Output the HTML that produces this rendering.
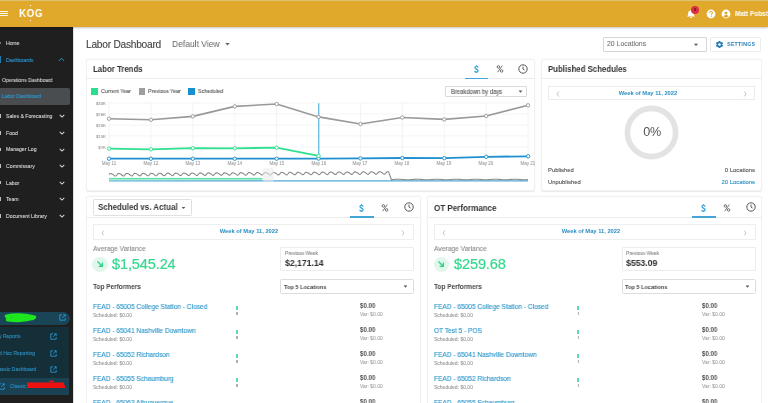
<!DOCTYPE html>
<html><head><meta charset="utf-8"><style>
html,body{margin:0;padding:0;}
body{width:768px;height:403px;overflow:hidden;position:relative;background:#fff;font-family:"Liberation Sans",sans-serif;}
.a{position:absolute;}
.t{position:absolute;white-space:nowrap;line-height:1;will-change:transform;}
</style></head><body>
<div class="a" style="left:0px;top:0px;width:768px;height:27px;background:#E0A92B;box-shadow:0 1px 2px rgba(0,0,0,0.25);z-index:2"></div>
<div class="a" style="left:0px;top:0px;width:768px;height:1px;background:#ddc170;z-index:3"></div>
<div class="a" style="left:0px;top:10.9px;width:7.5px;height:0.9000000000000004px;background:#fff6e0;z-index:3"></div>
<div class="a" style="left:0px;top:12.9px;width:7.5px;height:0.9000000000000004px;background:#fff6e0;z-index:3"></div>
<div class="a" style="left:0px;top:15.0px;width:7.5px;height:0.9000000000000004px;background:#fff6e0;z-index:3"></div>
<div class="t" style="left:18.80px;top:7.51px;font-size:10.5px;color:#fff;font-weight:700;letter-spacing:0.6px;transform:scaleX(0.93);transform-origin:0 0;z-index:3">KOG</div>
<div class="a" style="left:30.2px;top:5px;width:0.6999999999999993px;height:1px;background:#fff;z-index:3"></div>
<div class="a" style="left:30.2px;top:20px;width:0.6999999999999993px;height:1px;background:#fff;z-index:3"></div>
<svg class="a" style="left:686.1px;top:9.2px;z-index:3" width="10" height="10" viewBox="0 0 10 10"><path d="M1.2 7.6 L1.2 7.1 L2.1 6.2 L2.1 4.2 C2.1 2.8 3 1.9 4.3 1.7 L4.3 1.2 L5.7 1.2 L5.7 1.7 C7 1.9 7.9 2.8 7.9 4.2 L7.9 6.2 L8.8 7.1 L8.8 7.6 Z" fill="#fff"/><rect x="4.1" y="8" width="1.8" height="1" rx="0.5" fill="#fff"/></svg>
<div class="a" style="left:691.3px;top:5.6px;width:8.2px;height:8.2px;border-radius:50%;background:#dc2f45;z-index:4"></div>
<div class="t" style="left:395.40px;width:600px;text-align:center;top:8.01px;font-size:4px;color:#4a0a14;font-weight:400;letter-spacing:0px;-webkit-text-stroke:0.1px #4a0a14;z-index:5">8</div>
<svg class="a" style="left:706px;top:9px;z-index:3" width="10" height="10" viewBox="0 0 10 10"><circle cx="5" cy="5" r="4.4" fill="#fff"/><path d="M3.5 3.9 C3.5 2.9 4.2 2.4 5 2.4 C5.9 2.4 6.5 3 6.5 3.7 C6.5 4.6 5.4 4.8 5.4 5.8" stroke="#E0A92B" stroke-width="1.05" fill="none"/><rect x="4.85" y="6.6" width="1.1" height="1.1" fill="#E0A92B"/></svg>
<svg class="a" style="left:721px;top:9px;z-index:3" width="10" height="10" viewBox="0 0 10 10"><circle cx="5" cy="5" r="4.4" fill="#fff"/><circle cx="5" cy="3.9" r="1.5" fill="#E0A92B"/><path d="M2.4 7.6 C3 6.4 4 6.1 5 6.1 C6 6.1 7 6.4 7.6 7.6 C7 8.3 6 8.7 5 8.7 C4 8.7 3 8.3 2.4 7.6Z" fill="#E0A92B"/></svg>
<div class="t" style="left:735.20px;top:11.46px;font-size:6.9px;color:#fff;font-weight:700;letter-spacing:0px;transform:scaleX(0.93);transform-origin:0 0;z-index:3">Matt Pobst</div>
<div class="a" style="left:0px;top:27px;width:72.5px;height:376px;background:#1f1f1f;"></div>
<div class="t" style="left:5.70px;top:40.63px;font-size:5.4px;color:#d8d8d8;font-weight:400;letter-spacing:0px;transform:scaleX(0.93);transform-origin:0 0;-webkit-text-stroke:0.1px #d8d8d8;">Home</div>
<div class="a" style="left:0px;top:42.2px;width:0.6px;height:1.3999999999999986px;background:#777;"></div>
<div class="a" style="left:0px;top:55.8px;width:0.8px;height:7.600000000000001px;background:#1f7ab0;"></div>
<div class="t" style="left:5.50px;top:57.51px;font-size:5.3px;color:#2c9ad6;font-weight:400;letter-spacing:0px;transform:scaleX(0.95);transform-origin:0 0;-webkit-text-stroke:0.1px #2c9ad6;">Dashboards</div>
<svg class="a" style="left:58px;top:57px" width="7" height="5" viewBox="0 0 7 5"><path d="M1 3.8 L3.5 1.3 L6 3.8" stroke="#2c9ad6" stroke-width="1" fill="none"/></svg>
<div class="t" style="left:2.40px;top:77.51px;font-size:5.3px;color:#cfcfcf;font-weight:400;letter-spacing:0px;transform:scaleX(0.95);transform-origin:0 0;-webkit-text-stroke:0.1px #cfcfcf;">Operations Dashboard</div>
<div class="a" style="left:0px;top:88px;width:69.5px;height:16.5px;background:#4a4d50;border-radius:0 2px 2px 0"></div>
<div class="t" style="left:2.40px;top:94.31px;font-size:5.3px;color:#2c9ad6;font-weight:400;letter-spacing:0px;transform:scaleX(0.95);transform-origin:0 0;-webkit-text-stroke:0.1px #2c9ad6;">Labor Dashboard</div>
<div class="t" style="left:5.50px;top:114.10px;font-size:5.2px;color:#d4d4d4;font-weight:400;letter-spacing:0px;-webkit-text-stroke:0.1px #d4d4d4">Sales &amp; Forecasting</div>
<svg class="a" style="left:58.5px;top:114.40px" width="6" height="4" viewBox="0 0 6 4"><path d="M0.7 0.8 L3 3.1 L5.3 0.8" stroke="#d0d0d0" stroke-width="1.05" fill="none"/></svg>
<div class="a" style="left:-1px;top:114.4px;width:1.6px;height:3.5999999999999943px;background:#bdbdbd;"></div>
<div class="t" style="left:5.50px;top:130.70px;font-size:5.2px;color:#d4d4d4;font-weight:400;letter-spacing:0px;-webkit-text-stroke:0.1px #d4d4d4">Food</div>
<svg class="a" style="left:58.5px;top:131.00px" width="6" height="4" viewBox="0 0 6 4"><path d="M0.7 0.8 L3 3.1 L5.3 0.8" stroke="#d0d0d0" stroke-width="1.05" fill="none"/></svg>
<div class="a" style="left:-1px;top:131.0px;width:1.6px;height:3.6000000000000227px;background:#bdbdbd;"></div>
<div class="t" style="left:5.50px;top:147.30px;font-size:5.2px;color:#d4d4d4;font-weight:400;letter-spacing:0px;-webkit-text-stroke:0.1px #d4d4d4">Manager Log</div>
<svg class="a" style="left:58.5px;top:147.60px" width="6" height="4" viewBox="0 0 6 4"><path d="M0.7 0.8 L3 3.1 L5.3 0.8" stroke="#d0d0d0" stroke-width="1.05" fill="none"/></svg>
<div class="a" style="left:-1px;top:147.6px;width:1.6px;height:3.6000000000000227px;background:#bdbdbd;"></div>
<div class="t" style="left:5.50px;top:163.90px;font-size:5.2px;color:#d4d4d4;font-weight:400;letter-spacing:0px;-webkit-text-stroke:0.1px #d4d4d4">Commissary</div>
<svg class="a" style="left:58.5px;top:164.20px" width="6" height="4" viewBox="0 0 6 4"><path d="M0.7 0.8 L3 3.1 L5.3 0.8" stroke="#d0d0d0" stroke-width="1.05" fill="none"/></svg>
<div class="a" style="left:-1px;top:164.2px;width:1.6px;height:3.6000000000000227px;background:#bdbdbd;"></div>
<div class="t" style="left:5.50px;top:180.50px;font-size:5.2px;color:#d4d4d4;font-weight:400;letter-spacing:0px;-webkit-text-stroke:0.1px #d4d4d4">Labor</div>
<svg class="a" style="left:58.5px;top:180.80px" width="6" height="4" viewBox="0 0 6 4"><path d="M0.7 0.8 L3 3.1 L5.3 0.8" stroke="#d0d0d0" stroke-width="1.05" fill="none"/></svg>
<div class="a" style="left:-1px;top:180.79999999999998px;width:1.6px;height:3.6000000000000227px;background:#bdbdbd;"></div>
<div class="t" style="left:5.50px;top:197.10px;font-size:5.2px;color:#d4d4d4;font-weight:400;letter-spacing:0px;-webkit-text-stroke:0.1px #d4d4d4">Team</div>
<svg class="a" style="left:58.5px;top:197.40px" width="6" height="4" viewBox="0 0 6 4"><path d="M0.7 0.8 L3 3.1 L5.3 0.8" stroke="#d0d0d0" stroke-width="1.05" fill="none"/></svg>
<div class="a" style="left:-1px;top:197.39999999999998px;width:1.6px;height:3.6000000000000227px;background:#bdbdbd;"></div>
<div class="t" style="left:5.50px;top:213.70px;font-size:5.2px;color:#d4d4d4;font-weight:400;letter-spacing:0px;-webkit-text-stroke:0.1px #d4d4d4">Document Library</div>
<svg class="a" style="left:58.5px;top:214.00px" width="6" height="4" viewBox="0 0 6 4"><path d="M0.7 0.8 L3 3.1 L5.3 0.8" stroke="#d0d0d0" stroke-width="1.05" fill="none"/></svg>
<div class="a" style="left:-1px;top:214.0px;width:1.6px;height:3.6000000000000227px;background:#bdbdbd;"></div>
<div class="a" style="left:0px;top:311.5px;width:69.6px;height:13.399999999999977px;background:#1a4556;border-radius:0 6.7px 6.7px 0"></div>
<svg class="a" style="left:0px;top:311px" width="40" height="14" viewBox="0 0 40 14"><path d="M6.5 5.2 C14 3.2 26 3.6 34.5 6.2 C28 9.2 18 10 7.5 8.6 C15 7.2 24 6.8 33 7.4" stroke="#1ee61e" stroke-width="3.6" fill="none" stroke-linecap="round" stroke-linejoin="round"/></svg>
<div class="a" style="left:0px;top:326.8px;width:69.2px;height:67.80000000000001px;background:#152f39;"></div>
<div class="a" style="left:0px;top:378px;width:69.2px;height:16.600000000000023px;background:#1a4253;"></div>
<svg class="a" style="left:58.60px;top:314.30px" width="7" height="7" viewBox="0 0 7 7"><path d="M3 0.8 L0.8 0.8 L0.8 6.2 L6.2 6.2 L6.2 4" stroke="#2c9ad6" stroke-width="0.85" fill="none"/><path d="M3.2 3.8 L6.2 0.8 M4.2 0.8 L6.2 0.8 L6.2 2.8" stroke="#2c9ad6" stroke-width="0.85" fill="none"/></svg>
<div class="t" style="left:-1.00px;top:334.17px;font-size:5.0px;color:#2c8fc0;font-weight:400;letter-spacing:0px;-webkit-text-stroke:0.1px #2c8fc0;">y Reports</div>
<svg class="a" style="left:50.20px;top:333.10px" width="7" height="7" viewBox="0 0 7 7"><path d="M3 0.8 L0.8 0.8 L0.8 6.2 L6.2 6.2 L6.2 4" stroke="#2c9ad6" stroke-width="0.85" fill="none"/><path d="M3.2 3.8 L6.2 0.8 M4.2 0.8 L6.2 0.8 L6.2 2.8" stroke="#2c9ad6" stroke-width="0.85" fill="none"/></svg>
<div class="t" style="left:-1.00px;top:350.77px;font-size:5.0px;color:#2c8fc0;font-weight:400;letter-spacing:0px;-webkit-text-stroke:0.1px #2c8fc0;">d Hoc Reporting</div>
<svg class="a" style="left:50.20px;top:349.70px" width="7" height="7" viewBox="0 0 7 7"><path d="M3 0.8 L0.8 0.8 L0.8 6.2 L6.2 6.2 L6.2 4" stroke="#2c9ad6" stroke-width="0.85" fill="none"/><path d="M3.2 3.8 L6.2 0.8 M4.2 0.8 L6.2 0.8 L6.2 2.8" stroke="#2c9ad6" stroke-width="0.85" fill="none"/></svg>
<div class="t" style="left:-1.00px;top:367.17px;font-size:5.0px;color:#2c8fc0;font-weight:400;letter-spacing:0px;-webkit-text-stroke:0.1px #2c8fc0;">assic Dashboard</div>
<svg class="a" style="left:50.20px;top:366.10px" width="7" height="7" viewBox="0 0 7 7"><path d="M3 0.8 L0.8 0.8 L0.8 6.2 L6.2 6.2 L6.2 4" stroke="#2c9ad6" stroke-width="0.85" fill="none"/><path d="M3.2 3.8 L6.2 0.8 M4.2 0.8 L6.2 0.8 L6.2 2.8" stroke="#2c9ad6" stroke-width="0.85" fill="none"/></svg>
<svg class="a" style="left:-2.00px;top:382.80px" width="7" height="7" viewBox="0 0 7 7"><path d="M3 0.8 L0.8 0.8 L0.8 6.2 L6.2 6.2 L6.2 4" stroke="#2c9ad6" stroke-width="0.85" fill="none"/><path d="M3.2 3.8 L6.2 0.8 M4.2 0.8 L6.2 0.8 L6.2 2.8" stroke="#2c9ad6" stroke-width="0.85" fill="none"/></svg>
<div class="t" style="left:9.70px;top:383.97px;font-size:5.0px;color:#2c8fc0;font-weight:400;letter-spacing:0px;-webkit-text-stroke:0.1px #2c8fc0;">Classic</div>
<svg class="a" style="left:24px;top:379px" width="44" height="12" viewBox="0 0 44 12"><path d="M3 5 L40 5 M3 7.5 L41 7.5" stroke="#ee1111" stroke-width="3.2" fill="none"/><rect x="25" y="1.6" width="5" height="1.6" fill="#ee1111"/></svg>
<div class="a" style="left:72.5px;top:27px;width:695.5px;height:376px;background:#fff;"></div>
<div class="a" style="left:72.5px;top:27px;width:1.0px;height:376px;background:#e0e0e0;"></div>
<div class="t" style="left:86.30px;top:39.66px;font-size:10.2px;color:#424242;font-weight:400;letter-spacing:-0.25px;-webkit-text-stroke:0.1px #424242">Labor Dashboard</div>
<div class="t" style="left:172.30px;top:39.37px;font-size:9.6px;color:#666;font-weight:400;letter-spacing:0px;transform:scaleX(0.885);transform-origin:0 0;">Default View</div>
<svg class="a" style="left:224px;top:42px" width="7" height="5" viewBox="0 0 7 5"><path d="M1.2 1 L5.8 1 L3.5 3.6Z" fill="#666"/></svg>
<div class="a" style="left:603.2px;top:37.2px;width:103.39999999999998px;height:14.399999999999999px;background:#fff;border:0.8px solid #d6d6d6;box-sizing:border-box;border-radius:1px"></div>
<div class="t" style="left:606.70px;top:41.46px;font-size:6.9px;color:#777;font-weight:400;letter-spacing:0px;-webkit-text-stroke:0.1px #777;">20 Locations</div>
<svg class="a" style="left:693px;top:42.6px" width="6" height="4" viewBox="0 0 6 4"><path d="M0.9 0.8 L5.1 0.8 L3 3.1Z" fill="#555"/></svg>
<div class="a" style="left:710.3px;top:37.0px;width:51.200000000000045px;height:15.0px;background:#fff;border:0.8px solid #ececec;box-sizing:border-box;border-radius:1.5px"></div>
<svg class="a" style="left:714.7px;top:39.9px" width="9" height="9" viewBox="0 0 24 24"><path fill="#1f77b4" d="M19.14 12.94c.04-.3.06-.61.06-.94 0-.32-.02-.64-.07-.94l2.03-1.58a.49.49 0 0 0 .12-.61l-1.92-3.32a.488.488 0 0 0-.59-.22l-2.39.96c-.5-.38-1.03-.7-1.62-.94l-.36-2.54a.484.484 0 0 0-.48-.41h-3.84c-.24 0-.43.17-.47.41l-.36 2.54c-.59.24-1.13.57-1.62.94l-2.39-.96c-.22-.08-.47 0-.59.22L2.74 8.87c-.12.21-.08.47.12.61l2.03 1.58c-.05.3-.09.63-.09.94s.02.64.07.94l-2.03 1.58a.49.49 0 0 0-.12.61l1.92 3.32c.12.22.37.29.59.22l2.39-.96c.5.38 1.03.7 1.62.94l.36 2.54c.05.24.24.41.48.41h3.84c.24 0 .44-.17.47-.41l.36-2.54c.59-.24 1.13-.56 1.62-.94l2.39.96c.22.08.47 0 .59-.22l1.92-3.32c.12-.22.07-.47-.12-.61l-2.01-1.58zM12 15.6c-1.98 0-3.6-1.62-3.6-3.6s1.62-3.6 3.6-3.6 3.6 1.62 3.6 3.6-1.62 3.6-3.6 3.6z"/></svg>
<div class="t" style="left:727.00px;top:41.25px;font-size:6.2px;color:#3382bb;font-weight:700;letter-spacing:0.25px;transform:scaleX(0.86);transform-origin:0 0;">SETTINGS</div>
<div class="a" style="left:85.6px;top:58.8px;width:449.1px;height:132.7px;background:#fff;border:0.6px solid #f1f1f1;box-sizing:border-box;box-shadow:0 0.8px 1.2px rgba(0,0,0,0.09);border-radius:2px"></div>
<div class="t" style="left:92.80px;top:64.85px;font-size:8.8px;color:#333;font-weight:700;letter-spacing:0px;transform:scaleX(0.89);transform-origin:0 0;">Labor Trends</div>
<div class="a" style="left:86.2px;top:78.0px;width:447.90000000000003px;height:0.7999999999999972px;background:#ededed;"></div>
<svg class="a" style="left:473.60px;top:64.90px" width="5" height="8.6" viewBox="0 0 5 8.6"><path d="M4.1 2.6 C4 1.8 3.4 1.3 2.5 1.3 C1.6 1.3 0.95 1.8 0.95 2.6 C0.95 4.4 4.1 3.8 4.1 5.8 C4.1 6.7 3.4 7.2 2.5 7.2 C1.5 7.2 0.85 6.7 0.8 5.9 M2.5 0.2 L2.5 1.4 M2.5 7.1 L2.5 8.3" stroke="#2a9fd6" stroke-width="1.15" fill="none"/></svg>
<svg class="a" style="left:495.50px;top:65.10px" width="8" height="8" viewBox="0 0 8 8"><circle cx="2.4" cy="1.9" r="1.25" stroke="#555" stroke-width="0.85" fill="none"/><circle cx="5.6" cy="5.9" r="1.25" stroke="#555" stroke-width="0.85" fill="none"/><path d="M6.3 0.6 L1.7 7.2" stroke="#555" stroke-width="0.85"/></svg>
<svg class="a" style="left:518.10px;top:63.70px" width="10" height="10" viewBox="0 0 10 10"><circle cx="5" cy="5" r="4.2" stroke="#555" stroke-width="1.0" fill="none"/><path d="M5 2.5 L5 5.1 L6.6 6.1" stroke="#555" stroke-width="0.95" fill="none"/></svg>
<div class="a" style="left:464.8px;top:77.89999999999999px;width:23.19999999999999px;height:1.4000000000000057px;background:#42a5d6;"></div>
<div class="a" style="left:91.2px;top:88.2px;width:6.700000000000003px;height:6.599999999999994px;background:#28e08c;"></div>
<div class="t" style="left:101.20px;top:88.64px;font-size:5.5px;color:#555;font-weight:400;letter-spacing:0px;transform:scaleX(0.97);transform-origin:0 0;-webkit-text-stroke:0.1px #555;">Current Year</div>
<div class="a" style="left:138.5px;top:88.2px;width:6.699999999999989px;height:6.599999999999994px;background:#9e9e9e;"></div>
<div class="t" style="left:148.20px;top:88.64px;font-size:5.5px;color:#555;font-weight:400;letter-spacing:0px;transform:scaleX(0.97);transform-origin:0 0;-webkit-text-stroke:0.1px #555;">Previous Year</div>
<div class="a" style="left:188.3px;top:88.2px;width:6.699999999999989px;height:6.599999999999994px;background:#1790d0;"></div>
<div class="t" style="left:198.00px;top:88.64px;font-size:5.5px;color:#555;font-weight:400;letter-spacing:0px;transform:scaleX(0.97);transform-origin:0 0;-webkit-text-stroke:0.1px #555;">Scheduled</div>
<div class="a" style="left:445.2px;top:86.1px;width:82.30000000000001px;height:10.900000000000006px;background:#fff;border:0.7px solid #dadada;box-sizing:border-box;border-radius:1px"></div>
<div class="t" style="left:450.80px;top:88.67px;font-size:6.3px;color:#555;font-weight:400;letter-spacing:0px;transform:scaleX(0.93);transform-origin:0 0;-webkit-text-stroke:0.1px #555;">Breakdown by days</div>
<svg class="a" style="left:518px;top:90px" width="5" height="3.5" viewBox="0 0 5 3.5"><path d="M0.6 0.6 L4.4 0.6 L2.5 2.8Z" fill="#555"/></svg>
<svg class="a" style="left:0;top:0" width="768" height="403" viewBox="0 0 768 403"><line x1="108.6" y1="103" x2="528.5" y2="103" stroke="#ececec" stroke-width="0.6"/><line x1="108.6" y1="114" x2="528.5" y2="114" stroke="#ececec" stroke-width="0.6"/><line x1="108.6" y1="125.1" x2="528.5" y2="125.1" stroke="#ececec" stroke-width="0.6"/><line x1="108.6" y1="135.9" x2="528.5" y2="135.9" stroke="#ececec" stroke-width="0.6"/><line x1="108.6" y1="147" x2="528.5" y2="147" stroke="#ececec" stroke-width="0.6"/><line x1="109.00" y1="103" x2="109.00" y2="158.7" stroke="#ececec" stroke-width="0.6"/><line x1="150.91" y1="103" x2="150.91" y2="158.7" stroke="#ececec" stroke-width="0.6"/><line x1="192.82" y1="103" x2="192.82" y2="158.7" stroke="#ececec" stroke-width="0.6"/><line x1="234.73" y1="103" x2="234.73" y2="158.7" stroke="#ececec" stroke-width="0.6"/><line x1="276.64" y1="103" x2="276.64" y2="158.7" stroke="#ececec" stroke-width="0.6"/><line x1="318.55" y1="103" x2="318.55" y2="158.7" stroke="#ececec" stroke-width="0.6"/><line x1="360.46" y1="103" x2="360.46" y2="158.7" stroke="#ececec" stroke-width="0.6"/><line x1="402.37" y1="103" x2="402.37" y2="158.7" stroke="#ececec" stroke-width="0.6"/><line x1="444.28" y1="103" x2="444.28" y2="158.7" stroke="#ececec" stroke-width="0.6"/><line x1="486.19" y1="103" x2="486.19" y2="158.7" stroke="#ececec" stroke-width="0.6"/><line x1="528.10" y1="103" x2="528.10" y2="158.7" stroke="#ececec" stroke-width="0.6"/><line x1="318.75" y1="103.2" x2="318.75" y2="158.7" stroke="#55b3de" stroke-width="1.15"/><polyline points="109.00,118.70 150.91,119.80 192.82,116.40 234.73,106.40 276.64,104.00 318.55,116.90 360.46,124.00 402.37,117.50 444.28,119.40 486.19,116.00 528.10,105.30" stroke="#999" stroke-width="1.6" fill="none" stroke-linejoin="round"/><polyline points="109.00,158.70 150.91,158.70 192.82,158.70 234.73,158.70 276.64,158.70 318.55,158.60 360.46,158.40 402.37,158.00 444.28,158.20 486.19,156.80 528.10,156.30" stroke="#1f8fd0" stroke-width="1.8" fill="none" stroke-linejoin="round"/><polyline points="109.00,148.60 150.91,149.30 192.82,148.20 234.73,148.30 276.64,147.70 318.55,155.90" stroke="#2ee090" stroke-width="1.8" fill="none" stroke-linejoin="round"/><circle cx="109.00" cy="118.70" r="1.7" fill="#fff" stroke="#9a9a9a" stroke-width="0.95"/><circle cx="150.91" cy="119.80" r="1.7" fill="#fff" stroke="#9a9a9a" stroke-width="0.95"/><circle cx="192.82" cy="116.40" r="1.7" fill="#fff" stroke="#9a9a9a" stroke-width="0.95"/><circle cx="234.73" cy="106.40" r="1.7" fill="#fff" stroke="#9a9a9a" stroke-width="0.95"/><circle cx="276.64" cy="104.00" r="1.7" fill="#fff" stroke="#9a9a9a" stroke-width="0.95"/><circle cx="318.55" cy="116.90" r="1.7" fill="#fff" stroke="#9a9a9a" stroke-width="0.95"/><circle cx="360.46" cy="124.00" r="1.7" fill="#fff" stroke="#9a9a9a" stroke-width="0.95"/><circle cx="402.37" cy="117.50" r="1.7" fill="#fff" stroke="#9a9a9a" stroke-width="0.95"/><circle cx="444.28" cy="119.40" r="1.7" fill="#fff" stroke="#9a9a9a" stroke-width="0.95"/><circle cx="486.19" cy="116.00" r="1.7" fill="#fff" stroke="#9a9a9a" stroke-width="0.95"/><circle cx="528.10" cy="105.30" r="1.7" fill="#fff" stroke="#9a9a9a" stroke-width="0.95"/><circle cx="109.00" cy="158.70" r="1.7" fill="#fff" stroke="#1f8fd0" stroke-width="0.95"/><circle cx="150.91" cy="158.70" r="1.7" fill="#fff" stroke="#1f8fd0" stroke-width="0.95"/><circle cx="192.82" cy="158.70" r="1.7" fill="#fff" stroke="#1f8fd0" stroke-width="0.95"/><circle cx="234.73" cy="158.70" r="1.7" fill="#fff" stroke="#1f8fd0" stroke-width="0.95"/><circle cx="276.64" cy="158.70" r="1.7" fill="#fff" stroke="#1f8fd0" stroke-width="0.95"/><circle cx="318.55" cy="158.60" r="1.7" fill="#fff" stroke="#1f8fd0" stroke-width="0.95"/><circle cx="360.46" cy="158.40" r="1.7" fill="#fff" stroke="#1f8fd0" stroke-width="0.95"/><circle cx="402.37" cy="158.00" r="1.7" fill="#fff" stroke="#1f8fd0" stroke-width="0.95"/><circle cx="444.28" cy="158.20" r="1.7" fill="#fff" stroke="#1f8fd0" stroke-width="0.95"/><circle cx="486.19" cy="156.80" r="1.7" fill="#fff" stroke="#1f8fd0" stroke-width="0.95"/><circle cx="528.10" cy="156.30" r="1.7" fill="#fff" stroke="#1f8fd0" stroke-width="0.95"/><circle cx="109.00" cy="148.60" r="1.7" fill="#fff" stroke="#2ee090" stroke-width="0.95"/><circle cx="150.91" cy="149.30" r="1.7" fill="#fff" stroke="#2ee090" stroke-width="0.95"/><circle cx="192.82" cy="148.20" r="1.7" fill="#fff" stroke="#2ee090" stroke-width="0.95"/><circle cx="234.73" cy="148.30" r="1.7" fill="#fff" stroke="#2ee090" stroke-width="0.95"/><circle cx="276.64" cy="147.70" r="1.7" fill="#fff" stroke="#2ee090" stroke-width="0.95"/><circle cx="318.55" cy="155.90" r="1.7" fill="#fff" stroke="#2ee090" stroke-width="0.95"/><rect x="109" y="178.0" width="153.5" height="2.6" fill="#a6ead0"/><line x1="109" y1="178.4" x2="262" y2="178.4" stroke="#3fe0a0" stroke-width="0.8"/><line x1="109" y1="181.0" x2="528" y2="180.9" stroke="#52a9d6" stroke-width="1.2"/><polyline points="109.00,174.56 109.60,173.89 110.20,173.53 110.80,173.52 111.40,173.71 112.00,173.98 112.60,174.26 113.20,174.61 113.80,175.08 114.40,175.61 115.00,176.01 115.60,176.06 116.20,175.68 116.80,174.97 117.40,174.20 118.00,173.64 118.60,173.44 119.20,173.53 119.80,173.76 120.40,174.04 121.00,174.34 121.60,174.74 122.20,175.25 122.80,175.75 123.40,176.03 124.00,175.90 124.60,175.35 125.20,174.58 125.80,173.87 126.40,173.46 127.00,173.39 127.60,173.56 128.20,173.82 128.80,174.10 129.40,174.44 130.00,174.89 130.60,175.41 131.20,175.85 131.80,175.97 132.40,175.66 133.00,174.99 133.60,174.20 134.20,173.60 134.80,173.34 135.40,173.39 136.00,173.61 136.60,173.88 137.20,174.17 137.80,174.55 138.40,175.05 139.00,175.56 139.60,175.89 140.20,175.84 140.80,175.36 141.40,174.60 142.00,173.86 142.60,173.39 143.20,173.27 143.80,173.41 144.40,173.66 145.00,173.94 145.60,174.26 146.20,174.69 146.80,175.22 147.40,175.68 148.00,175.87 148.60,175.63 149.20,175.00 149.80,174.22 150.40,173.57 151.00,173.24 151.60,173.25 152.20,173.46 152.80,173.72 153.40,174.01 154.00,174.37 154.60,174.85 155.20,175.37 155.80,175.75 156.40,175.77 157.00,175.35 157.60,174.62 158.20,173.86 158.80,173.33 159.40,173.16 160.00,173.27 160.60,173.51 161.20,173.78 161.80,174.09 162.40,174.50 163.00,175.02 163.60,175.51 164.20,175.76 164.80,175.59 165.40,175.02 166.00,174.24 166.60,173.55 167.20,173.16 167.80,173.12 168.40,173.30 169.00,173.57 169.60,173.85 170.20,174.19 170.80,174.65 171.40,175.18 172.00,175.60 172.60,175.69 173.20,175.34 173.80,174.64 174.40,173.87 175.00,173.29 175.60,173.05 176.20,173.12 176.80,173.35 177.40,173.63 178.00,173.92 178.60,174.31 179.20,174.82 179.80,175.33 180.40,175.63 181.00,175.54 181.60,175.02 182.20,174.26 182.80,173.53 183.40,173.09 184.00,173.00 184.60,173.15 185.20,173.41 185.80,173.69 186.40,174.02 187.00,174.46 187.60,174.98 188.20,175.44 188.80,175.59 189.40,175.31 190.00,174.66 190.60,173.88 191.20,173.25 191.80,172.96 192.40,172.99 193.00,173.20 193.60,173.47 194.20,173.76 194.80,174.13 195.40,174.62 196.00,175.14 196.60,175.49 197.20,175.47 197.80,175.02 198.40,174.28 199.00,173.53 199.60,173.03 200.20,172.88 200.80,173.01 201.40,173.25 202.00,173.53 202.60,173.85 203.20,174.27 203.80,174.78 204.40,175.26 205.00,175.48 205.60,175.28 206.20,174.68 206.80,173.90 207.40,173.22 208.00,172.87 208.60,172.85 209.20,173.05 209.80,173.31 210.40,173.60 211.00,173.95 211.60,174.42 212.20,174.95 212.80,175.34 213.40,175.40 214.00,175.01 214.60,174.30 215.20,173.53 215.80,172.98 216.40,172.77 217.00,172.86 217.60,173.10 218.20,173.37 218.80,173.68 219.40,174.08 220.00,174.58 220.60,175.09 221.20,175.36 221.80,175.23 222.40,174.69 223.00,173.91 223.60,173.21 224.20,172.79 224.80,172.73 225.40,172.90 226.00,173.16 226.60,173.44 227.20,173.77 227.80,174.22 228.40,174.75 229.00,175.19 229.60,175.31 230.20,175.00 230.80,174.32 231.40,173.54 232.00,172.94 232.60,172.67 233.20,172.72 233.80,172.95 234.40,173.22 235.00,173.51 235.60,173.89 236.20,174.39 236.80,174.90 237.40,175.23 238.00,175.18 238.60,174.69 239.20,173.94 239.80,173.20 240.40,172.73 241.00,172.61 241.60,172.75 242.20,173.00 242.80,173.28 243.40,173.60 244.00,174.03 244.60,174.55 245.20,175.02 245.80,175.21 246.40,174.97 247.00,174.34 247.60,173.55 248.20,172.91 248.80,172.58 249.40,172.59 250.00,172.79 250.60,173.06 251.20,173.35 251.80,173.71 252.40,174.19 253.00,174.71 253.60,175.09 254.20,175.11 254.80,174.69 255.40,173.96 256.00,173.20 256.60,172.67 257.20,172.49 257.80,172.60 258.40,172.85 259.00,173.12 259.60,173.43 260.20,173.84 260.80,174.35 261.40,174.84 262.00,175.09 262.60,174.93 263.20,174.35 263.80,173.57 264.40,172.88 265.00,172.50 265.60,172.46 266.20,172.64 266.80,172.90 267.40,173.18 268.00,173.53 268.60,173.99 269.20,174.52 269.80,174.93 270.40,175.02 271.00,174.67 271.60,173.98 272.20,173.20 272.80,172.62 273.40,172.39 274.00,172.46 274.60,172.69 275.20,172.96 275.80,173.26 276.40,173.65 277.00,174.15 277.60,174.66 278.20,174.97 278.80,174.88 279.40,174.36 280.00,173.59 280.60,172.87 281.20,172.43 281.80,172.33 282.40,172.49 283.00,172.75 283.60,173.02 284.20,173.35 284.80,173.79 285.40,174.32 286.00,174.77 286.60,174.93 287.20,174.65 287.80,174.00 288.40,173.22 289.00,172.59 289.60,172.29 290.20,172.32 290.80,172.54 291.40,172.81 292.00,173.10 292.60,173.47 293.20,173.95 293.80,174.47 294.40,174.83 295.00,174.81 295.60,174.36 296.20,173.62 296.80,172.87 297.40,172.37 298.00,172.22 298.60,172.34 299.20,172.59 299.80,172.87 300.40,173.18 301.00,173.60 301.60,174.12 302.20,174.60 302.80,174.82 303.40,174.62 304.00,174.01 304.60,173.23 305.20,172.56 305.80,172.21 306.40,172.19 307.00,172.38 307.60,172.65 308.20,172.93 308.80,173.29 309.40,173.76 310.00,174.28 310.60,174.68 311.20,174.73 311.80,174.35 312.40,173.64 313.00,172.87 313.60,172.31 314.20,172.11 314.80,172.20 315.40,172.44 316.00,172.71 316.60,173.01 317.20,173.41 317.80,173.92 318.40,174.42 319.00,174.70 319.60,174.57 320.20,174.02 320.80,173.25 321.40,172.54 322.00,172.13 322.60,172.06 323.20,172.23 323.80,172.49 324.40,172.77 325.00,173.11 325.60,173.56 326.20,174.09 326.80,174.52 327.40,174.65 328.00,174.33 328.60,173.66 329.20,172.88 329.80,172.27 330.40,172.01 331.00,172.06 331.60,172.28 332.20,172.55 332.80,172.85 333.40,173.23 334.00,173.72 334.60,174.24 335.20,174.57 335.80,174.51 336.40,174.03 337.00,173.27 337.60,172.53 338.20,172.06 338.80,171.94 339.40,172.08 340.00,172.34 340.60,172.61 341.20,172.94 341.80,173.37 342.40,173.89 343.00,174.36 343.60,174.54 344.20,174.30 344.80,173.68 345.40,172.89 346.00,172.24 346.60,171.92 347.20,171.92 347.80,172.13 348.40,172.40 349.00,172.68 349.60,173.04 350.20,173.52 350.80,174.05 351.40,174.42 352.00,174.44 352.60,174.02 353.20,173.30 353.80,172.53 354.40,172.01 355.00,171.83 355.60,171.94 356.20,172.18 356.80,172.46 357.40,172.77 358.00,173.17 358.60,173.69 359.20,174.18 359.80,174.43 360.40,174.26 361.00,173.69 361.60,172.91 362.20,172.22 362.80,171.84 363.40,171.79 364.00,171.98 364.60,172.24 365.20,172.52 365.80,172.87 366.40,173.33 367.00,173.85 367.60,174.27 368.20,174.36 368.80,174.01 369.40,173.32 370.00,172.54 370.60,171.96 371.20,171.73 371.80,171.80 372.40,172.03 373.00,172.30 373.60,172.60 374.20,172.99 374.80,173.49 375.40,174.00 376.00,174.30 376.60,174.21 377.20,173.70 377.80,172.93 378.40,172.21 379.00,171.76 379.60,171.67 380.20,171.83 380.80,172.08 381.40,172.36 382.00,172.69 382.60,173.13 383.20,173.66 383.80,174.11 384.40,174.26 385.00,173.99 385.60,173.34 386.20,172.55 386.80,171.92 387.40,171.63 388.00,171.66 388.60,171.87 391.50,180.00 393.00,179.50 394.00,179.40 395.00,179.32 396.00,179.25 397.00,179.21 398.00,179.20 399.00,179.22 400.00,179.27 401.00,179.34 402.00,179.43 403.00,179.53 404.00,179.62 405.00,179.70 406.00,179.76 407.00,179.79 408.00,179.80 409.00,179.77 410.00,179.72 411.00,179.64 412.00,179.55 413.00,179.45 414.00,179.36 415.00,179.28 416.00,179.23 417.00,179.20 418.00,179.21 419.00,179.24 420.00,179.30 421.00,179.39 422.00,179.48 423.00,179.57 424.00,179.66 425.00,179.73 426.00,179.78 427.00,179.80 428.00,179.79 429.00,179.74 430.00,179.68 431.00,179.59 432.00,179.50 433.00,179.40 434.00,179.32 435.00,179.25 436.00,179.21 437.00,179.20 438.00,179.22 439.00,179.27 440.00,179.34 441.00,179.43 442.00,179.53 443.00,179.62 444.00,179.70 445.00,179.76 446.00,179.80 447.00,179.80 448.00,179.77 449.00,179.71 450.00,179.63 451.00,179.54 452.00,179.45 453.00,179.35 454.00,179.28 455.00,179.23 456.00,179.20 457.00,179.21 458.00,179.24 459.00,179.31 460.00,179.39 461.00,179.48 462.00,179.58 463.00,179.67 464.00,179.74 465.00,179.78 466.00,179.80 467.00,179.79 468.00,179.74 469.00,179.67 470.00,179.59 471.00,179.49 472.00,179.40 473.00,179.31 474.00,179.25 475.00,179.21 476.00,179.20 477.00,179.22 478.00,179.27 479.00,179.35 480.00,179.44 481.00,179.53 482.00,179.63 483.00,179.71 484.00,179.76 485.00,179.80 486.00,179.80 487.00,179.77 488.00,179.71 489.00,179.63 490.00,179.54 491.00,179.44 492.00,179.35 493.00,179.28 494.00,179.22 495.00,179.20 496.00,179.21 497.00,179.25 498.00,179.31 499.00,179.39 500.00,179.49 501.00,179.58 502.00,179.67 503.00,179.74 504.00,179.78 505.00,179.80 506.00,179.78 507.00,179.74 508.00,179.67 509.00,179.58 510.00,179.49 511.00,179.39 512.00,179.31 513.00,179.25 514.00,179.21 515.00,179.20 516.00,179.22 517.00,179.28 518.00,179.35 519.00,179.44 520.00,179.54 521.00,179.63 522.00,179.71 523.00,179.77 524.00,179.80 525.00,179.80 526.00,179.76 527.00,179.71 528.00,179.63" stroke="#858585" stroke-width="1.05" fill="none" stroke-linejoin="round"/><rect x="262.5" y="168.3" width="11.5" height="13.5" rx="2" fill="rgba(235,235,235,0.6)"/></svg>
<div class="t" style="left:-494.20px;width:600px;text-align:right;top:102.16px;font-size:4.3px;color:#999;font-weight:400;letter-spacing:0px;-webkit-text-stroke:0.1px #999;">$33K</div>
<div class="t" style="left:-494.20px;width:600px;text-align:right;top:113.16px;font-size:4.3px;color:#999;font-weight:400;letter-spacing:0px;-webkit-text-stroke:0.1px #999;">$26K</div>
<div class="t" style="left:-494.20px;width:600px;text-align:right;top:124.26px;font-size:4.3px;color:#999;font-weight:400;letter-spacing:0px;-webkit-text-stroke:0.1px #999;">$20K</div>
<div class="t" style="left:-494.20px;width:600px;text-align:right;top:135.06px;font-size:4.3px;color:#999;font-weight:400;letter-spacing:0px;-webkit-text-stroke:0.1px #999;">$13K</div>
<div class="t" style="left:-494.20px;width:600px;text-align:right;top:146.16px;font-size:4.3px;color:#999;font-weight:400;letter-spacing:0px;-webkit-text-stroke:0.1px #999;">$7K</div>
<div class="t" style="left:-191.00px;width:600px;text-align:center;top:161.69px;font-size:4.5px;color:#a3a3a3;font-weight:400;letter-spacing:0px;-webkit-text-stroke:0.1px #a3a3a3;">May 11</div>
<div class="t" style="left:-149.09px;width:600px;text-align:center;top:161.69px;font-size:4.5px;color:#a3a3a3;font-weight:400;letter-spacing:0px;-webkit-text-stroke:0.1px #a3a3a3;">May 12</div>
<div class="t" style="left:-107.18px;width:600px;text-align:center;top:161.69px;font-size:4.5px;color:#a3a3a3;font-weight:400;letter-spacing:0px;-webkit-text-stroke:0.1px #a3a3a3;">May 13</div>
<div class="t" style="left:-65.27px;width:600px;text-align:center;top:161.69px;font-size:4.5px;color:#a3a3a3;font-weight:400;letter-spacing:0px;-webkit-text-stroke:0.1px #a3a3a3;">May 14</div>
<div class="t" style="left:-23.36px;width:600px;text-align:center;top:161.69px;font-size:4.5px;color:#a3a3a3;font-weight:400;letter-spacing:0px;-webkit-text-stroke:0.1px #a3a3a3;">May 15</div>
<div class="t" style="left:18.55px;width:600px;text-align:center;top:161.69px;font-size:4.5px;color:#a3a3a3;font-weight:400;letter-spacing:0px;-webkit-text-stroke:0.1px #a3a3a3;">May 16</div>
<div class="t" style="left:60.46px;width:600px;text-align:center;top:161.69px;font-size:4.5px;color:#a3a3a3;font-weight:400;letter-spacing:0px;-webkit-text-stroke:0.1px #a3a3a3;">May 17</div>
<div class="t" style="left:102.37px;width:600px;text-align:center;top:161.69px;font-size:4.5px;color:#a3a3a3;font-weight:400;letter-spacing:0px;-webkit-text-stroke:0.1px #a3a3a3;">May 18</div>
<div class="t" style="left:144.28px;width:600px;text-align:center;top:161.69px;font-size:4.5px;color:#a3a3a3;font-weight:400;letter-spacing:0px;-webkit-text-stroke:0.1px #a3a3a3;">May 19</div>
<div class="t" style="left:186.19px;width:600px;text-align:center;top:161.69px;font-size:4.5px;color:#a3a3a3;font-weight:400;letter-spacing:0px;-webkit-text-stroke:0.1px #a3a3a3;">May 20</div>
<div class="t" style="left:228.10px;width:600px;text-align:center;top:161.69px;font-size:4.5px;color:#a3a3a3;font-weight:400;letter-spacing:0px;-webkit-text-stroke:0.1px #a3a3a3;">May 21</div>
<div class="a" style="left:540.8px;top:58.8px;width:220.9000000000001px;height:132.7px;background:#fff;border:0.6px solid #f1f1f1;box-sizing:border-box;box-shadow:0 0.8px 1.2px rgba(0,0,0,0.09);border-radius:2px"></div>
<div class="t" style="left:548.00px;top:65.05px;font-size:8.8px;color:#333;font-weight:700;letter-spacing:0px;transform:scaleX(0.89);transform-origin:0 0;">Published Schedules</div>
<div class="a" style="left:541.4px;top:78.0px;width:219.70000000000005px;height:0.7999999999999972px;background:#ededed;"></div>
<div class="a" style="left:548px;top:86.3px;width:207.39999999999998px;height:14.200000000000003px;background:#fff;border:0.6px solid #ececec;box-sizing:border-box"></div>
<svg class="a" style="left:556.00px;top:90.80px" width="4" height="6" viewBox="0 0 4 6"><path d="M2.9 0.5 L1 3 L2.9 5.5" stroke="#b0b0b0" stroke-width="0.75" fill="none"/></svg>
<svg class="a" style="left:742.90px;top:90.80px" width="4" height="6" viewBox="0 0 4 6"><path d="M1.1 0.5 L3 3 L1.1 5.5" stroke="#b0b0b0" stroke-width="0.75" fill="none"/></svg>
<div class="t" style="left:347.50px;width:600px;text-align:center;top:90.69px;font-size:5.8px;color:#2b8fc2;font-weight:700;letter-spacing:-0.02px;">Week of May 11, 2022</div>
<svg class="a" style="left:621px;top:101.8px" width="61" height="61" viewBox="0 0 61 61"><circle cx="30.5" cy="30.5" r="24.1" stroke="#e3e3e3" stroke-width="5.6" fill="none"/></svg>
<div class="t" style="left:351.50px;width:600px;text-align:center;top:125.53px;font-size:12.6px;color:#555;font-weight:400;letter-spacing:-0.3px;">0%</div>
<div class="t" style="left:548.00px;top:168.00px;font-size:5.9px;color:#555;font-weight:400;letter-spacing:0px;-webkit-text-stroke:0.12px #555">Published</div>
<div class="t" style="left:155.40px;width:600px;text-align:right;top:168.00px;font-size:5.9px;color:#555;font-weight:400;letter-spacing:0px;-webkit-text-stroke:0.12px #555">0 Locations</div>
<div class="t" style="left:548.00px;top:179.90px;font-size:5.9px;color:#555;font-weight:400;letter-spacing:0px;-webkit-text-stroke:0.12px #555">Unpublished</div>
<div class="t" style="left:155.40px;width:600px;text-align:right;top:179.90px;font-size:5.9px;color:#2e92c6;font-weight:400;letter-spacing:0px;-webkit-text-stroke:0.12px #2e92c6">20 Locations</div>
<div class="a" style="left:86px;top:196.2px;width:334.5px;height:213.8px;background:#fff;border:0.6px solid #f1f1f1;box-sizing:border-box;box-shadow:0 0.8px 1.2px rgba(0,0,0,0.09);border-radius:2px"></div>
<div class="a" style="left:92.6px;top:199.2px;width:99.70000000000002px;height:16.400000000000006px;background:#fff;border:0.8px solid #e0e0e0;box-sizing:border-box;border-radius:1.5px"></div>
<div class="t" style="left:98.40px;top:203.12px;font-size:8.6px;color:#353535;font-weight:700;letter-spacing:0px;transform:scaleX(0.925);transform-origin:0 0;">Scheduled vs. Actual</div>
<svg class="a" style="left:181.00px;top:206px" width="5" height="4" viewBox="0 0 5 4"><path d="M0.6 1 L4.4 1 L2.5 3Z" fill="#555"/></svg>
<div class="a" style="left:86.6px;top:217.0px;width:333.29999999999995px;height:0.6999999999999886px;background:#ededed;"></div>
<svg class="a" style="left:359.40px;top:203.50px" width="5" height="8.6" viewBox="0 0 5 8.6"><path d="M4.1 2.6 C4 1.8 3.4 1.3 2.5 1.3 C1.6 1.3 0.95 1.8 0.95 2.6 C0.95 4.4 4.1 3.8 4.1 5.8 C4.1 6.7 3.4 7.2 2.5 7.2 C1.5 7.2 0.85 6.7 0.8 5.9 M2.5 0.2 L2.5 1.4 M2.5 7.1 L2.5 8.3" stroke="#2a9fd6" stroke-width="1.15" fill="none"/></svg>
<svg class="a" style="left:380.60px;top:203.70px" width="8" height="8" viewBox="0 0 8 8"><circle cx="2.4" cy="1.9" r="1.25" stroke="#555" stroke-width="0.85" fill="none"/><circle cx="5.6" cy="5.9" r="1.25" stroke="#555" stroke-width="0.85" fill="none"/><path d="M6.3 0.6 L1.7 7.2" stroke="#555" stroke-width="0.85"/></svg>
<svg class="a" style="left:403.50px;top:202.30px" width="10" height="10" viewBox="0 0 10 10"><circle cx="5" cy="5" r="4.2" stroke="#555" stroke-width="1.0" fill="none"/><path d="M5 2.5 L5 5.1 L6.6 6.1" stroke="#555" stroke-width="0.95" fill="none"/></svg>
<div class="a" style="left:350.0px;top:216.20000000000002px;width:23.700000000000045px;height:1.3999999999999773px;background:#42a5d6;"></div>
<div class="a" style="left:92.6px;top:224.2px;width:321.4px;height:15.800000000000011px;background:#fff;border:0.7px solid #eeeeee;box-sizing:border-box"></div>
<svg class="a" style="left:100.90px;top:229.50px" width="4" height="6" viewBox="0 0 4 6"><path d="M2.9 0.5 L1 3 L2.9 5.5" stroke="#b0b0b0" stroke-width="0.75" fill="none"/></svg>
<svg class="a" style="left:400.90px;top:229.50px" width="4" height="6" viewBox="0 0 4 6"><path d="M1.1 0.5 L3 3 L1.1 5.5" stroke="#b0b0b0" stroke-width="0.75" fill="none"/></svg>
<div class="t" style="left:-50.65px;width:600px;text-align:center;top:228.99px;font-size:5.8px;color:#2b8fc2;font-weight:700;letter-spacing:-0.02px;">Week of May 11, 2022</div>
<div class="t" style="left:93.00px;top:244.90px;font-size:7.8px;color:#888;font-weight:400;letter-spacing:0px;transform:scaleX(0.86);transform-origin:0 0;-webkit-text-stroke:0.1px #888;">Average Variance</div>
<div class="a" style="left:92.30px;top:256.6px;width:15.3px;height:15.3px;border-radius:50%;background:#e1f7ec"></div>
<svg class="a" style="left:96.00px;top:260.3px" width="8" height="8" viewBox="0 0 8 8"><path d="M1.5 1.5 L6.2 6.2 M6.4 2.6 L6.4 6.4 L2.6 6.4" stroke="#2fd08a" stroke-width="1.3" fill="none"/></svg>
<div class="t" style="left:112.20px;top:257.24px;font-size:14.6px;color:#35d88e;font-weight:400;letter-spacing:-0.15px;-webkit-text-stroke:0.2px #35d88e">$1,545.24</div>
<div class="a" style="left:280.2px;top:247.3px;width:133.90000000000003px;height:23.69999999999999px;background:#fff;border:0.7px solid #ececec;box-sizing:border-box;border-radius:1px"></div>
<div class="t" style="left:284.70px;top:251.28px;font-size:5.1px;color:#888;font-weight:400;letter-spacing:0px;transform:scaleX(0.97);transform-origin:0 0;-webkit-text-stroke:0.1px #888;">Previous Week</div>
<div class="t" style="left:284.70px;top:258.51px;font-size:9.2px;color:#333;font-weight:700;letter-spacing:-0.1px;transform:scaleX(0.96);transform-origin:0 0;">$2,171.14</div>
<div class="t" style="left:93.00px;top:283.20px;font-size:7.2px;color:#444;font-weight:700;letter-spacing:0px;transform:scaleX(0.9);transform-origin:0 0;">Top Performers</div>
<div class="a" style="left:280.2px;top:279.0px;width:133.90000000000003px;height:15.300000000000011px;background:#fff;border:0.8px solid #dddddd;box-sizing:border-box;border-radius:1.5px"></div>
<div class="t" style="left:283.70px;top:283.52px;font-size:6.0px;color:#444;font-weight:700;letter-spacing:0px;transform:scaleX(0.93);transform-origin:0 0;">Top 5 Locations</div>
<svg class="a" style="left:403.00px;top:285.2px" width="5" height="3.5" viewBox="0 0 5 3.5"><path d="M0.6 0.6 L4.4 0.6 L2.5 2.8Z" fill="#555"/></svg>
<div class="t" style="left:92.50px;top:302.72px;font-size:7.3px;color:#3399cc;font-weight:400;letter-spacing:0px;transform:scaleX(0.9);transform-origin:0 0;-webkit-text-stroke:0.15px #3399cc">FEAD - 65005 College Station - Closed</div>
<div class="t" style="left:92.50px;top:312.57px;font-size:5.0px;color:#999;font-weight:400;letter-spacing:0px;-webkit-text-stroke:0.1px #999;">Scheduled: $0.00</div>
<div class="a" style="left:235.9px;top:306.3px;width:2.1999999999999886px;height:3.6999999999999886px;background:#62d9ae;"></div>
<div class="a" style="left:236.2px;top:311.7px;width:1.700000000000017px;height:3.2000000000000455px;background:#b0b0b0;"></div>
<div class="t" style="left:360.40px;top:303.27px;font-size:6.3px;color:#505050;font-weight:700;letter-spacing:0px;transform:scaleX(0.97);transform-origin:0 0;">$0.00</div>
<div class="t" style="left:360.40px;top:311.77px;font-size:5.0px;color:#a5a5a5;font-weight:400;letter-spacing:0px;-webkit-text-stroke:0.1px #a5a5a5;">Var: $0.00</div>
<div class="t" style="left:92.50px;top:326.77px;font-size:7.3px;color:#3399cc;font-weight:400;letter-spacing:0px;transform:scaleX(0.9);transform-origin:0 0;-webkit-text-stroke:0.15px #3399cc">FEAD - 65041 Nashville Downtown</div>
<div class="t" style="left:92.50px;top:336.62px;font-size:5.0px;color:#999;font-weight:400;letter-spacing:0px;-webkit-text-stroke:0.1px #999;">Scheduled: $0.00</div>
<div class="a" style="left:235.9px;top:330.35px;width:2.1999999999999886px;height:3.6999999999999886px;background:#62d9ae;"></div>
<div class="a" style="left:236.2px;top:335.75px;width:1.700000000000017px;height:3.2000000000000455px;background:#b0b0b0;"></div>
<div class="t" style="left:360.40px;top:327.32px;font-size:6.3px;color:#505050;font-weight:700;letter-spacing:0px;transform:scaleX(0.97);transform-origin:0 0;">$0.00</div>
<div class="t" style="left:360.40px;top:335.82px;font-size:5.0px;color:#a5a5a5;font-weight:400;letter-spacing:0px;-webkit-text-stroke:0.1px #a5a5a5;">Var: $0.00</div>
<div class="t" style="left:92.50px;top:350.82px;font-size:7.3px;color:#3399cc;font-weight:400;letter-spacing:0px;transform:scaleX(0.9);transform-origin:0 0;-webkit-text-stroke:0.15px #3399cc">FEAD - 65052 Richardson</div>
<div class="t" style="left:92.50px;top:360.67px;font-size:5.0px;color:#999;font-weight:400;letter-spacing:0px;-webkit-text-stroke:0.1px #999;">Scheduled: $0.00</div>
<div class="a" style="left:235.9px;top:354.40000000000003px;width:2.1999999999999886px;height:3.6999999999999886px;background:#62d9ae;"></div>
<div class="a" style="left:236.2px;top:359.8px;width:1.700000000000017px;height:3.2000000000000455px;background:#b0b0b0;"></div>
<div class="t" style="left:360.40px;top:351.37px;font-size:6.3px;color:#505050;font-weight:700;letter-spacing:0px;transform:scaleX(0.97);transform-origin:0 0;">$0.00</div>
<div class="t" style="left:360.40px;top:359.87px;font-size:5.0px;color:#a5a5a5;font-weight:400;letter-spacing:0px;-webkit-text-stroke:0.1px #a5a5a5;">Var: $0.00</div>
<div class="t" style="left:92.50px;top:374.87px;font-size:7.3px;color:#3399cc;font-weight:400;letter-spacing:0px;transform:scaleX(0.9);transform-origin:0 0;-webkit-text-stroke:0.15px #3399cc">FEAD - 65055 Schaumburg</div>
<div class="t" style="left:92.50px;top:384.72px;font-size:5.0px;color:#999;font-weight:400;letter-spacing:0px;-webkit-text-stroke:0.1px #999;">Scheduled: $0.00</div>
<div class="a" style="left:235.9px;top:378.45000000000005px;width:2.1999999999999886px;height:3.6999999999999886px;background:#62d9ae;"></div>
<div class="a" style="left:236.2px;top:383.85px;width:1.700000000000017px;height:3.2000000000000455px;background:#b0b0b0;"></div>
<div class="t" style="left:360.40px;top:375.42px;font-size:6.3px;color:#505050;font-weight:700;letter-spacing:0px;transform:scaleX(0.97);transform-origin:0 0;">$0.00</div>
<div class="t" style="left:360.40px;top:383.92px;font-size:5.0px;color:#a5a5a5;font-weight:400;letter-spacing:0px;-webkit-text-stroke:0.1px #a5a5a5;">Var: $0.00</div>
<div class="t" style="left:92.50px;top:398.92px;font-size:7.3px;color:#3399cc;font-weight:400;letter-spacing:0px;transform:scaleX(0.9);transform-origin:0 0;-webkit-text-stroke:0.15px #3399cc">FEAD - 65063 Albuquerque</div>
<div class="t" style="left:92.50px;top:408.77px;font-size:5.0px;color:#999;font-weight:400;letter-spacing:0px;-webkit-text-stroke:0.1px #999;">Scheduled: $0.00</div>
<div class="a" style="left:235.9px;top:402.5px;width:2.1999999999999886px;height:3.6999999999999886px;background:#62d9ae;"></div>
<div class="a" style="left:236.2px;top:407.9px;width:1.700000000000017px;height:3.2000000000000455px;background:#b0b0b0;"></div>
<div class="t" style="left:360.40px;top:399.47px;font-size:6.3px;color:#505050;font-weight:700;letter-spacing:0px;transform:scaleX(0.97);transform-origin:0 0;">$0.00</div>
<div class="t" style="left:360.40px;top:407.97px;font-size:5.0px;color:#a5a5a5;font-weight:400;letter-spacing:0px;-webkit-text-stroke:0.1px #a5a5a5;">Var: $0.00</div>
<div class="a" style="left:427.4px;top:196.2px;width:335.1px;height:213.8px;background:#fff;border:0.6px solid #f1f1f1;box-sizing:border-box;box-shadow:0 0.8px 1.2px rgba(0,0,0,0.09);border-radius:2px"></div>
<div class="t" style="left:434.40px;top:203.52px;font-size:8.6px;color:#333;font-weight:700;letter-spacing:0px;transform:scaleX(0.935);transform-origin:0 0;">OT Performance</div>
<div class="a" style="left:428.0px;top:217.0px;width:333.9px;height:0.6999999999999886px;background:#ededed;"></div>
<svg class="a" style="left:701.40px;top:203.50px" width="5" height="8.6" viewBox="0 0 5 8.6"><path d="M4.1 2.6 C4 1.8 3.4 1.3 2.5 1.3 C1.6 1.3 0.95 1.8 0.95 2.6 C0.95 4.4 4.1 3.8 4.1 5.8 C4.1 6.7 3.4 7.2 2.5 7.2 C1.5 7.2 0.85 6.7 0.8 5.9 M2.5 0.2 L2.5 1.4 M2.5 7.1 L2.5 8.3" stroke="#2a9fd6" stroke-width="1.15" fill="none"/></svg>
<svg class="a" style="left:722.60px;top:203.70px" width="8" height="8" viewBox="0 0 8 8"><circle cx="2.4" cy="1.9" r="1.25" stroke="#555" stroke-width="0.85" fill="none"/><circle cx="5.6" cy="5.9" r="1.25" stroke="#555" stroke-width="0.85" fill="none"/><path d="M6.3 0.6 L1.7 7.2" stroke="#555" stroke-width="0.85"/></svg>
<svg class="a" style="left:745.50px;top:202.30px" width="10" height="10" viewBox="0 0 10 10"><circle cx="5" cy="5" r="4.2" stroke="#555" stroke-width="1.0" fill="none"/><path d="M5 2.5 L5 5.1 L6.6 6.1" stroke="#555" stroke-width="0.95" fill="none"/></svg>
<div class="a" style="left:692.0px;top:216.20000000000002px;width:23.700000000000045px;height:1.3999999999999773px;background:#42a5d6;"></div>
<div class="a" style="left:434.0px;top:224.2px;width:322.0px;height:15.800000000000011px;background:#fff;border:0.7px solid #eeeeee;box-sizing:border-box"></div>
<svg class="a" style="left:442.30px;top:229.50px" width="4" height="6" viewBox="0 0 4 6"><path d="M2.9 0.5 L1 3 L2.9 5.5" stroke="#b0b0b0" stroke-width="0.75" fill="none"/></svg>
<svg class="a" style="left:742.90px;top:229.50px" width="4" height="6" viewBox="0 0 4 6"><path d="M1.1 0.5 L3 3 L1.1 5.5" stroke="#b0b0b0" stroke-width="0.75" fill="none"/></svg>
<div class="t" style="left:291.05px;width:600px;text-align:center;top:228.99px;font-size:5.8px;color:#2b8fc2;font-weight:700;letter-spacing:-0.02px;">Week of May 11, 2022</div>
<div class="t" style="left:434.40px;top:244.90px;font-size:7.8px;color:#888;font-weight:400;letter-spacing:0px;transform:scaleX(0.86);transform-origin:0 0;-webkit-text-stroke:0.1px #888;">Average Variance</div>
<div class="a" style="left:433.70px;top:256.6px;width:15.3px;height:15.3px;border-radius:50%;background:#e1f7ec"></div>
<svg class="a" style="left:437.40px;top:260.3px" width="8" height="8" viewBox="0 0 8 8"><path d="M1.5 1.5 L6.2 6.2 M6.4 2.6 L6.4 6.4 L2.6 6.4" stroke="#2fd08a" stroke-width="1.3" fill="none"/></svg>
<div class="t" style="left:453.60px;top:257.24px;font-size:14.6px;color:#35d88e;font-weight:400;letter-spacing:-0.15px;-webkit-text-stroke:0.2px #35d88e">$259.68</div>
<div class="a" style="left:621.5999999999999px;top:247.3px;width:134.5000000000001px;height:23.69999999999999px;background:#fff;border:0.7px solid #ececec;box-sizing:border-box;border-radius:1px"></div>
<div class="t" style="left:626.10px;top:251.28px;font-size:5.1px;color:#888;font-weight:400;letter-spacing:0px;transform:scaleX(0.97);transform-origin:0 0;-webkit-text-stroke:0.1px #888;">Previous Week</div>
<div class="t" style="left:626.10px;top:258.51px;font-size:9.2px;color:#333;font-weight:700;letter-spacing:-0.1px;transform:scaleX(0.96);transform-origin:0 0;">$553.09</div>
<div class="t" style="left:434.40px;top:283.20px;font-size:7.2px;color:#444;font-weight:700;letter-spacing:0px;transform:scaleX(0.9);transform-origin:0 0;">Top Performers</div>
<div class="a" style="left:621.5999999999999px;top:279.0px;width:134.5000000000001px;height:15.300000000000011px;background:#fff;border:0.8px solid #dddddd;box-sizing:border-box;border-radius:1.5px"></div>
<div class="t" style="left:625.10px;top:283.52px;font-size:6.0px;color:#444;font-weight:700;letter-spacing:0px;transform:scaleX(0.93);transform-origin:0 0;">Top 5 Locations</div>
<svg class="a" style="left:745.00px;top:285.2px" width="5" height="3.5" viewBox="0 0 5 3.5"><path d="M0.6 0.6 L4.4 0.6 L2.5 2.8Z" fill="#555"/></svg>
<div class="t" style="left:433.90px;top:302.72px;font-size:7.3px;color:#3399cc;font-weight:400;letter-spacing:0px;transform:scaleX(0.9);transform-origin:0 0;-webkit-text-stroke:0.15px #3399cc">FEAD - 65005 College Station - Closed</div>
<div class="t" style="left:433.90px;top:312.57px;font-size:5.0px;color:#999;font-weight:400;letter-spacing:0px;-webkit-text-stroke:0.1px #999;">Scheduled: $0.00</div>
<div class="a" style="left:577.3px;top:306.3px;width:2.2000000000000455px;height:3.6999999999999886px;background:#62d9ae;"></div>
<div class="a" style="left:577.5999999999999px;top:311.7px;width:1.7000000000000455px;height:3.2000000000000455px;background:#b0b0b0;"></div>
<div class="t" style="left:701.80px;top:303.27px;font-size:6.3px;color:#505050;font-weight:700;letter-spacing:0px;transform:scaleX(0.97);transform-origin:0 0;">$0.00</div>
<div class="t" style="left:701.80px;top:311.77px;font-size:5.0px;color:#a5a5a5;font-weight:400;letter-spacing:0px;-webkit-text-stroke:0.1px #a5a5a5;">Var: $0.00</div>
<div class="t" style="left:433.90px;top:326.77px;font-size:7.3px;color:#3399cc;font-weight:400;letter-spacing:0px;transform:scaleX(0.9);transform-origin:0 0;-webkit-text-stroke:0.15px #3399cc">OT Test 5 - POS</div>
<div class="t" style="left:433.90px;top:336.62px;font-size:5.0px;color:#999;font-weight:400;letter-spacing:0px;-webkit-text-stroke:0.1px #999;">Scheduled: $0.00</div>
<div class="a" style="left:577.3px;top:330.35px;width:2.2000000000000455px;height:3.6999999999999886px;background:#62d9ae;"></div>
<div class="a" style="left:577.5999999999999px;top:335.75px;width:1.7000000000000455px;height:3.2000000000000455px;background:#b0b0b0;"></div>
<div class="t" style="left:701.80px;top:327.32px;font-size:6.3px;color:#505050;font-weight:700;letter-spacing:0px;transform:scaleX(0.97);transform-origin:0 0;">$0.00</div>
<div class="t" style="left:701.80px;top:335.82px;font-size:5.0px;color:#a5a5a5;font-weight:400;letter-spacing:0px;-webkit-text-stroke:0.1px #a5a5a5;">Var: $0.00</div>
<div class="t" style="left:433.90px;top:350.82px;font-size:7.3px;color:#3399cc;font-weight:400;letter-spacing:0px;transform:scaleX(0.9);transform-origin:0 0;-webkit-text-stroke:0.15px #3399cc">FEAD - 65041 Nashville Downtown</div>
<div class="t" style="left:433.90px;top:360.67px;font-size:5.0px;color:#999;font-weight:400;letter-spacing:0px;-webkit-text-stroke:0.1px #999;">Scheduled: $0.00</div>
<div class="a" style="left:577.3px;top:354.40000000000003px;width:2.2000000000000455px;height:3.6999999999999886px;background:#62d9ae;"></div>
<div class="a" style="left:577.5999999999999px;top:359.8px;width:1.7000000000000455px;height:3.2000000000000455px;background:#b0b0b0;"></div>
<div class="t" style="left:701.80px;top:351.37px;font-size:6.3px;color:#505050;font-weight:700;letter-spacing:0px;transform:scaleX(0.97);transform-origin:0 0;">$0.00</div>
<div class="t" style="left:701.80px;top:359.87px;font-size:5.0px;color:#a5a5a5;font-weight:400;letter-spacing:0px;-webkit-text-stroke:0.1px #a5a5a5;">Var: $0.00</div>
<div class="t" style="left:433.90px;top:374.87px;font-size:7.3px;color:#3399cc;font-weight:400;letter-spacing:0px;transform:scaleX(0.9);transform-origin:0 0;-webkit-text-stroke:0.15px #3399cc">FEAD - 65052 Richardson</div>
<div class="t" style="left:433.90px;top:384.72px;font-size:5.0px;color:#999;font-weight:400;letter-spacing:0px;-webkit-text-stroke:0.1px #999;">Scheduled: $0.00</div>
<div class="a" style="left:577.3px;top:378.45000000000005px;width:2.2000000000000455px;height:3.6999999999999886px;background:#62d9ae;"></div>
<div class="a" style="left:577.5999999999999px;top:383.85px;width:1.7000000000000455px;height:3.2000000000000455px;background:#b0b0b0;"></div>
<div class="t" style="left:701.80px;top:375.42px;font-size:6.3px;color:#505050;font-weight:700;letter-spacing:0px;transform:scaleX(0.97);transform-origin:0 0;">$0.00</div>
<div class="t" style="left:701.80px;top:383.92px;font-size:5.0px;color:#a5a5a5;font-weight:400;letter-spacing:0px;-webkit-text-stroke:0.1px #a5a5a5;">Var: $0.00</div>
<div class="t" style="left:433.90px;top:398.92px;font-size:7.3px;color:#3399cc;font-weight:400;letter-spacing:0px;transform:scaleX(0.9);transform-origin:0 0;-webkit-text-stroke:0.15px #3399cc">FEAD - 65055 Schaumburg</div>
<div class="t" style="left:433.90px;top:408.77px;font-size:5.0px;color:#999;font-weight:400;letter-spacing:0px;-webkit-text-stroke:0.1px #999;">Scheduled: $0.00</div>
<div class="a" style="left:577.3px;top:402.5px;width:2.2000000000000455px;height:3.6999999999999886px;background:#62d9ae;"></div>
<div class="a" style="left:577.5999999999999px;top:407.9px;width:1.7000000000000455px;height:3.2000000000000455px;background:#b0b0b0;"></div>
<div class="t" style="left:701.80px;top:399.47px;font-size:6.3px;color:#505050;font-weight:700;letter-spacing:0px;transform:scaleX(0.97);transform-origin:0 0;">$0.00</div>
<div class="t" style="left:701.80px;top:407.97px;font-size:5.0px;color:#a5a5a5;font-weight:400;letter-spacing:0px;-webkit-text-stroke:0.1px #a5a5a5;">Var: $0.00</div>
</body></html>
